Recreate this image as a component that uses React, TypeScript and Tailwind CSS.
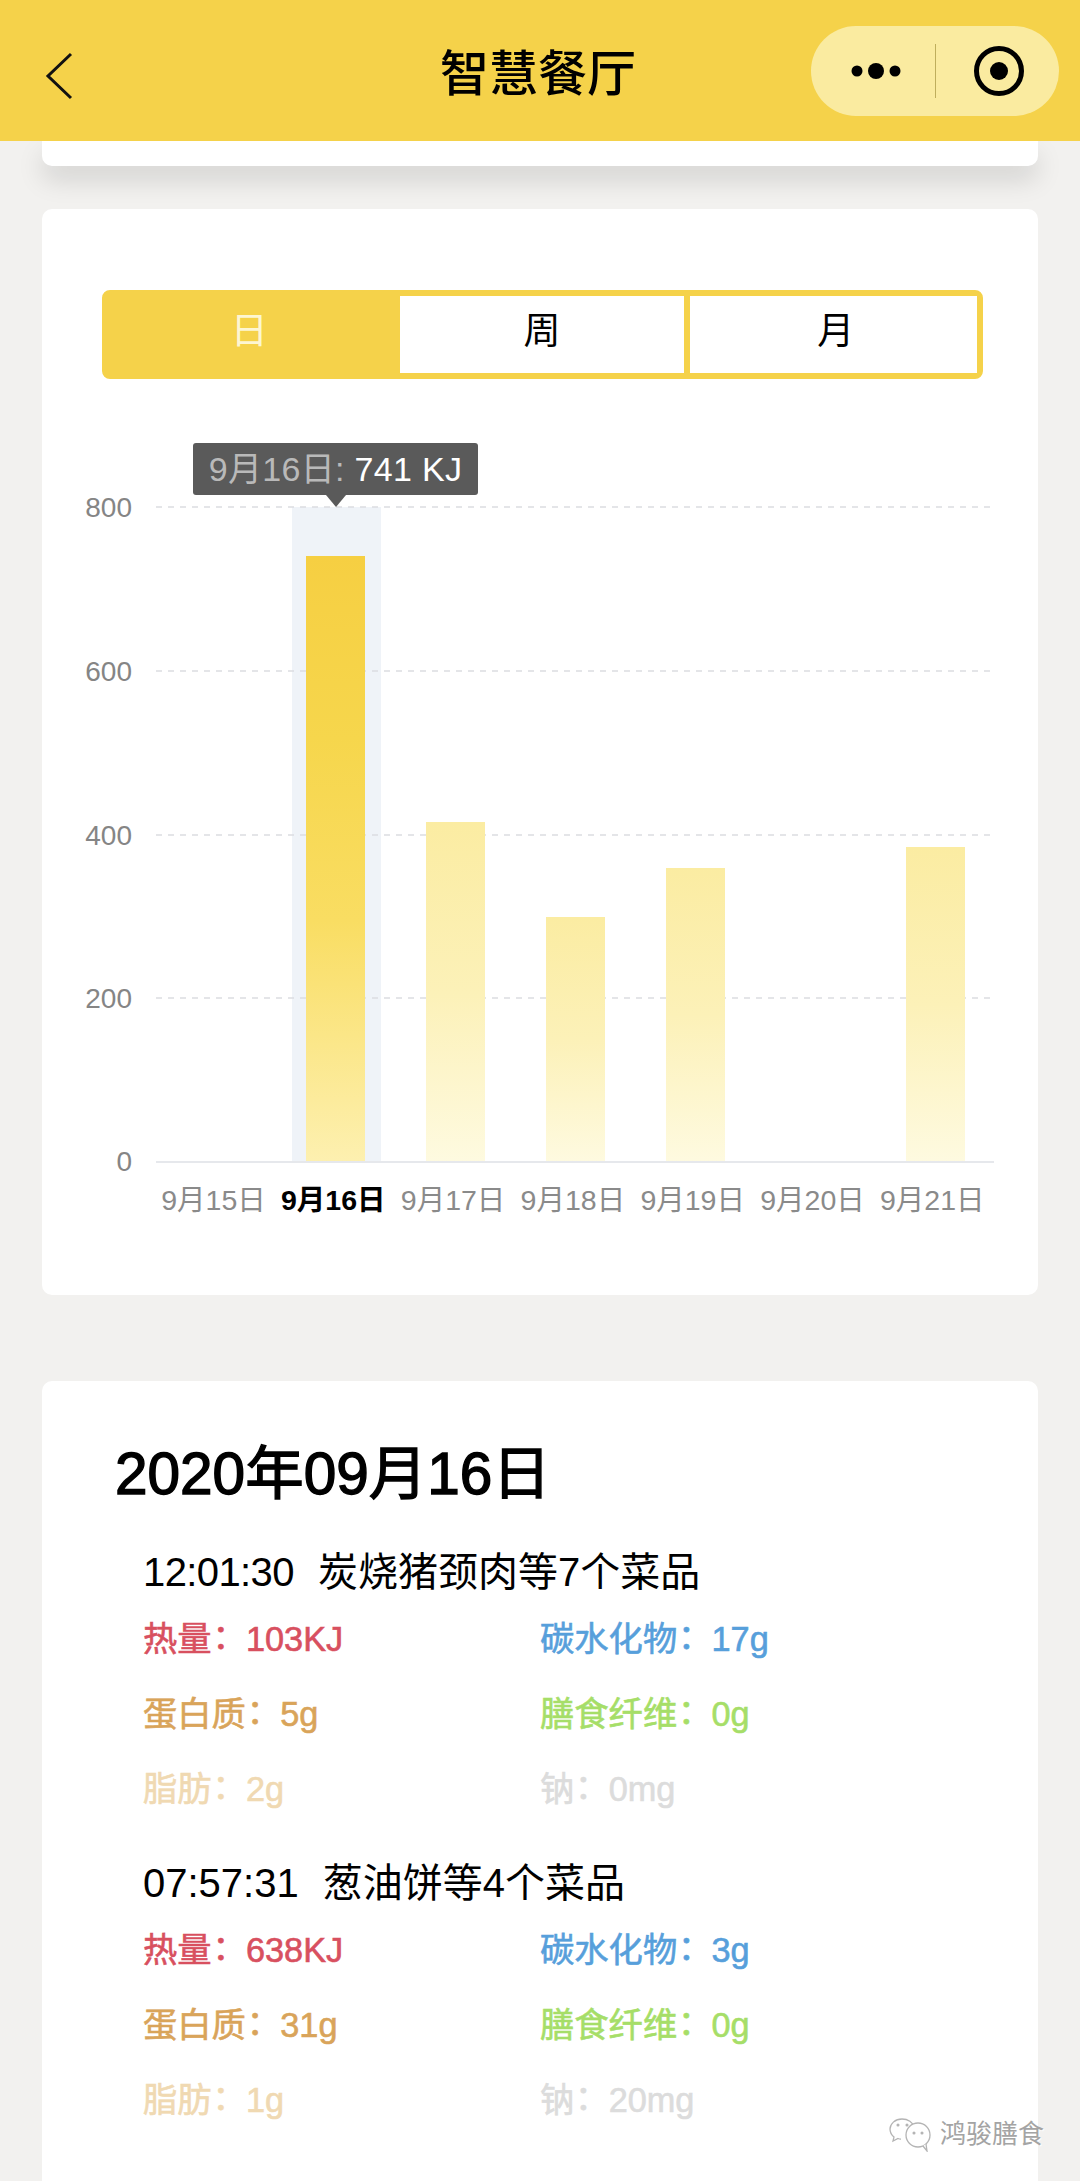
const FONT = "font-['Liberation_Sans','Noto_Sans_CJK_SC',sans-serif]";

type Nut = { label: string; value: string; color: string };

function Meal({ time, name, track, rows }: { time: string; name: string; track: string; rows: Nut[] }) {
  return (
    <div className="pl-[101px]">
      <div className="h-[52px] text-[40px] leading-[52px] text-black flex gap-[24px]">
        <span className={track}>{time}</span>
        <span>{name}</span>
      </div>
      <div className="grid grid-cols-[397px_1fr] auto-rows-[75px] mt-[13px] text-[34.3px] leading-[50px] [-webkit-text-stroke-width:0.6px]">
        {rows.map((r) => (
          <div key={r.label} className={r.color}>
            {r.label.slice(0, -1)}
            <span className="tracking-[-8px]">{r.label.slice(-1)}</span>
            <span className="font-['Noto_Sans_CJK_TC'] tracking-[8px]">：</span>
            {r.value}
          </div>
        ))}
      </div>
    </div>
  );
}

const RED = "text-[#d8505f]";
const BLUE = "text-[#579fdb]";
const ORANGE = "text-[#d9a45a]";
const GREEN = "text-[#a6de68]";
const PEACH = "text-[#f0d9b2]";
const GREY = "text-[#dcdcdc]";

const nut = (a: string, b: string, c: string, d: string, e: string, f: string): Nut[] => [
  { label: "热量", value: a, color: RED },
  { label: "碳水化物", value: b, color: BLUE },
  { label: "蛋白质", value: c, color: ORANGE },
  { label: "膳食纤维", value: d, color: GREEN },
  { label: "脂肪", value: e, color: PEACH },
  { label: "钠", value: f, color: GREY },
];

const GRID = [
  { y: 507, label: "800" },
  { y: 671, label: "600" },
  { y: 835, label: "400" },
  { y: 998, label: "200" },
];

const BARS = [
  { x: 306, top: 556, active: true },
  { x: 426, top: 822, active: false },
  { x: 546, top: 917, active: false },
  { x: 666, top: 868, active: false },
  { x: 906, top: 847, active: false },
];

const LABELS = ["9月15日", "9月16日", "9月17日", "9月18日", "9月19日", "9月20日", "9月21日"];

function Chart() {
  // the svg starts at page y=430, page x=42
  const ox = 42;
  const oy = 430;
  return (
    <svg width={996} height={800} className="block" style={{ fontFamily: "'Liberation Sans','Noto Sans CJK SC',sans-serif" }}>
      <defs>
        <linearGradient id="hi" x1="0" y1="0" x2="0" y2="1">
          <stop offset="0" stopColor="#f6cf42" />
          <stop offset="0.3" stopColor="#f6d64c" />
          <stop offset="0.6" stopColor="#f9dd62" />
          <stop offset="1" stopColor="#fdf0b0" />
        </linearGradient>
        <linearGradient id="lo" x1="0" y1="0" x2="0" y2="1">
          <stop offset="0" stopColor="#fbeca2" />
          <stop offset="0.5" stopColor="#fcf1b8" />
          <stop offset="1" stopColor="#fefae0" />
        </linearGradient>
      </defs>
      <rect x={292 - ox} y={507 - oy} width={89} height={655} fill="#eff3f8" />
      {GRID.map((g) => (
        <line key={g.y} x1={156 - ox} x2={994 - ox} y1={g.y - oy} y2={g.y - oy} stroke="#dcdde1" strokeWidth={1.5} strokeDasharray="6 6" />
      ))}
      {BARS.map((b) => (
        <rect key={b.x} x={b.x - ox} y={b.top - oy} width={59} height={1162 - b.top} fill={b.active ? "url(#hi)" : "url(#lo)"} />
      ))}
      <line x1={156 - ox} x2={994 - ox} y1={1162 - oy} y2={1162 - oy} stroke="#e6e8ec" strokeWidth={2} />
      {[...GRID, { y: 1161, label: "0" }].map((g) => (
        <text key={g.label} x={132 - ox} y={g.y - oy + 10} textAnchor="end" fontSize={28} fill="#858585">
          {g.label}
        </text>
      ))}
      {LABELS.map((l, i) => (
        <text
          key={l}
          x={213.5 + i * 119.8 - ox}
          y={1210 - oy}
          textAnchor="middle"
          fontSize={28.5}
          fontWeight={i === 1 ? 700 : 400}
          fill={i === 1 ? "#000000" : "#8a8a8a"}
        >
          {l}
        </text>
      ))}
    </svg>
  );
}

export default function App() {
  return (
    <div className={`relative w-[1080px] h-[2181px] overflow-hidden bg-[#f2f1ef] ${FONT}`}>
      <header className="relative z-10 h-[141px] bg-[#f5d24a] flex items-center justify-between pl-[45px] pr-[21px] pb-[3px]">
        <svg width="28" height="48" viewBox="0 0 28 48" fill="none" stroke="#111" strokeWidth="3" className="mt-[13px]">
          <path d="M26 2 L3 24 L26 46" />
        </svg>
        <div className="absolute left-[440px] top-[45px] w-[196px] text-center text-[49px] leading-[58px] font-medium text-black whitespace-nowrap">
          智慧餐厅
        </div>
        <div className="w-[248px] h-[90px] rounded-full bg-[#faeba0] flex items-center pl-[40px] mt-[3px]">
          <svg width="50" height="20" viewBox="0 0 50 20" fill="#000">
            <circle cx="6" cy="10" r="5.5" />
            <circle cx="25" cy="10" r="8" />
            <circle cx="44" cy="10" r="5.5" />
          </svg>
          <div className="w-px h-[54px] bg-[#bfae5c] ml-[34px]" />
          <svg width="52" height="52" viewBox="0 0 52 52" className="ml-[37px]" fill="none">
            <circle cx="26" cy="26" r="22.5" stroke="#000" strokeWidth="5" />
            <circle cx="26" cy="26" r="9" fill="#000" />
          </svg>
        </div>
      </header>

      <div className="mx-[42px] h-[25px] bg-white rounded-b-[10px] shadow-[0_14px_26px_rgba(0,0,0,0.13)]" />

      <section className="relative mx-[42px] mt-[43px] h-[1086px] bg-white rounded-[10px] pt-[81px]">
        <div className="mx-[60px] h-[89px] w-[881px] rounded-[8px] bg-[#f5d24a] border-[6px] border-[#f5d24a] flex text-[37px] leading-[37px]">
          <div className="w-[292px] flex items-center justify-center text-[#fdf6d2] pr-[9px] pb-[6px]">日</div>
          <div className="w-[285px] bg-white flex items-center justify-center text-black pb-[6px]">周</div>
          <div className="w-[287px] ml-[6px] bg-white flex items-center justify-center text-black pb-[6px] pl-[4px]">月</div>
        </div>
        <div className="mt-[51px]">
          <Chart />
        </div>
        {/* tooltip */}
        <div className="absolute left-[151px] top-[234px] w-[285px] h-[52px] rounded-[3px] bg-[#5a5a5a] flex items-center justify-center text-[34px] leading-none tracking-[0.3px] whitespace-nowrap">
          <span className="text-[#b9b9b9]">9月16日:&nbsp;</span>
          <span className="text-white">741 KJ</span>
          <span className="absolute left-[133px] top-[52px] w-0 h-0 border-l-[10px] border-r-[10px] border-t-[12px] border-l-transparent border-r-transparent border-t-[#5a5a5a]" />
        </div>
      </section>

      <section className="mx-[42px] mt-[86px] h-[820px] bg-white rounded-t-[10px] pt-[63px]">
        <h2 className="pl-[73px] text-[58.5px] leading-[60px] font-normal text-black [-webkit-text-stroke:1.4px_black]">
          2020年09月16日
        </h2>
        <div className="mt-[42px]">
          <Meal time="12:01:30" name="炭烧猪颈肉等7个菜品" track="tracking-[-0.6px]" rows={nut("103KJ", "17g", "5g", "0g", "2g", "0mg")} />
        </div>
        <div className="mt-[21px]">
          <Meal time="07:57:31" name="葱油饼等4个菜品" track="tracking-normal" rows={nut("638KJ", "3g", "31g", "0g", "1g", "20mg")} />
        </div>
      </section>

      {/* watermark */}
      <div className="absolute left-[889px] top-[2116px] flex items-center gap-[9px] text-[26px] leading-[34px] text-[#a4a4a4] [text-shadow:1px_1px_1px_#fff]">
        <svg width="42" height="36" viewBox="0 0 42 36" fill="none" stroke="#b4b4b4" strokeWidth="1.3">
          <path d="M13 3C6 3 1 8 1 13c0 3 1.500 6 4 8l-1 4 5-2.500c1 .4 2 .6 3 .6" />
          <path d="M13 3c6 0 11 3.500 12 8" />
          <circle cx="29" cy="19" r="12" fill="#fff" />
          <path d="M34 30l4 5-1-7" fill="#fff" />
          <circle cx="25" cy="17" r="0.9" fill="#a4a4a4" />
          <circle cx="33" cy="17" r="0.9" fill="#a4a4a4" />
          <circle cx="9" cy="9" r="0.9" fill="#a4a4a4" />
          <circle cx="18" cy="9" r="0.9" fill="#a4a4a4" />
        </svg>
        <span>鸿骏膳食</span>
      </div>
    </div>
  );
}
